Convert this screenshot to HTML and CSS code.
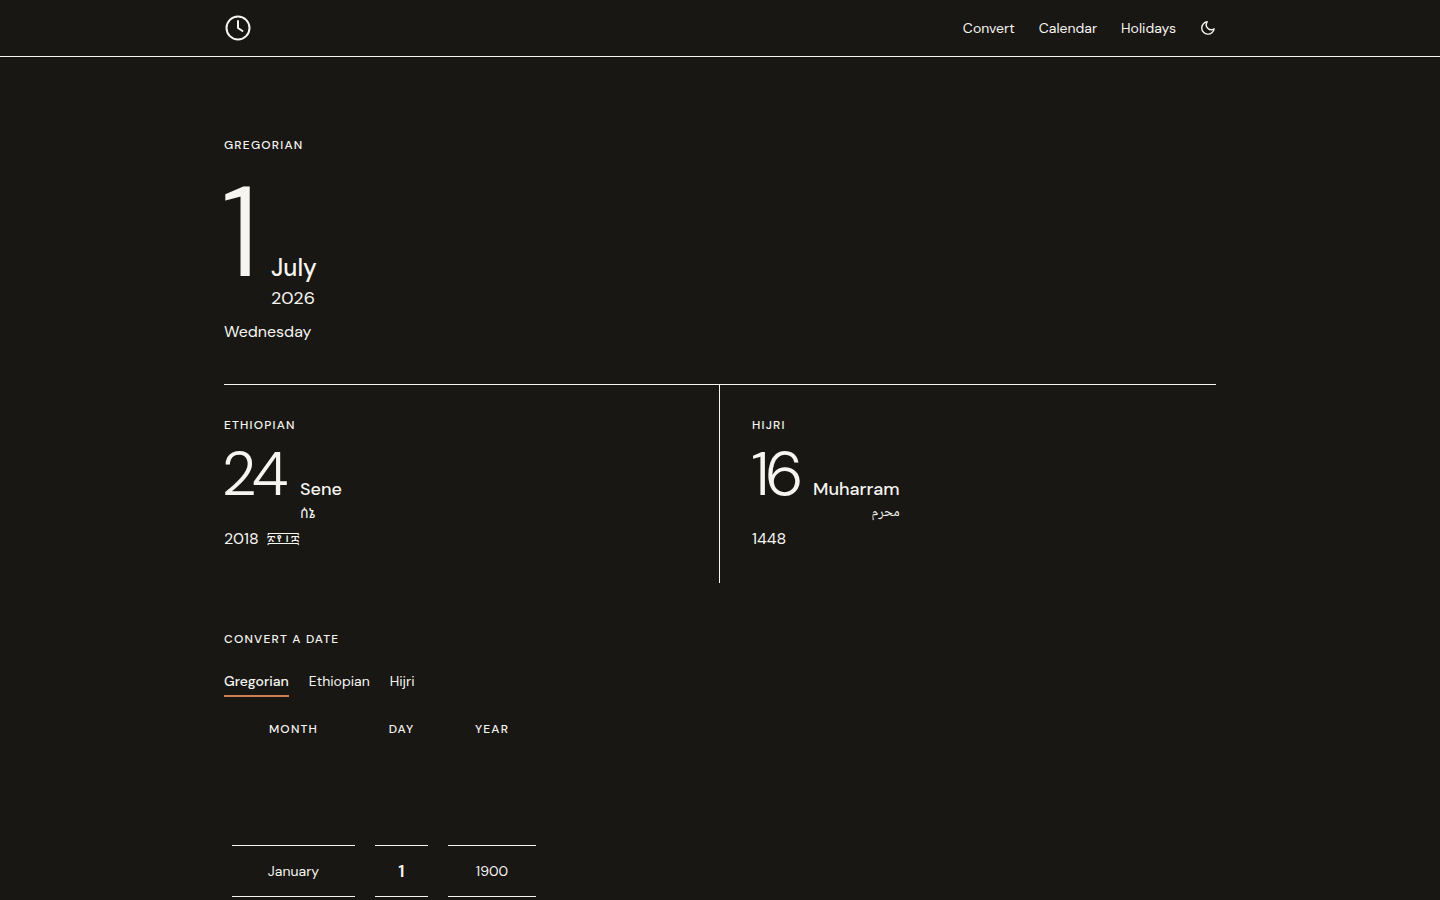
FILE: index.html
```html
<!doctype html>
<html lang="en">

<head>
    <meta charset="utf-8">
    <title>Calendar Converter</title>
    <link rel="stylesheet" href="styles.css">
</head>

<body>
    <header class="site-header">
        <div class="wrap header-row">
            <a class="logo" href="#">
                <svg width="28" height="28" viewBox="0 0 28 28" fill="none" stroke="currentColor" stroke-width="2">
                    <circle cx="14" cy="14" r="11.5" />
                    <path d="M14 7v7l4.5 3" stroke-linecap="round" stroke-linejoin="round" />
                </svg>
            </a>
            <nav class="nav">
                <a href="#convert">Convert</a>
                <a href="#calendar">Calendar</a>
                <a href="#holidays">Holidays</a>
                <button class="theme-toggle" type="button">
                    <svg width="16" height="16" viewBox="0 0 16 16" fill="none" stroke="currentColor" stroke-width="1.4" stroke-linecap="round" stroke-linejoin="round">
                        <path d="M14.1 8.8A6.2 6.2 0 1 1 7.2 1.8 5 5 0 0 0 14.1 8.8z" />
                    </svg>
                </button>
            </nav>
        </div>
    </header>

    <main class="wrap">
        <section class="today">
            <h2 class="label">Gregorian</h2>
            <div class="hero-date">
                <span class="hero-day">1</span>
                <div class="hero-side">
                    <span class="hero-month">July</span>
                    <span class="hero-year">2026</span>
                </div>
            </div>
            <p class="weekday">Wednesday</p>
        </section>

        <section class="others">
            <div class="other">
                <h2 class="label">Ethiopian</h2>
                <div class="date-row">
                    <span class="day">24</span>
                    <div class="side">
                        <span class="month">Sene</span>
                        <span class="native ethiopic" lang="am">ሰኔ</span>
                    </div>
                </div>
                <p class="year">2018 <span class="geez" lang="am">፳፻፲፰</span></p>
            </div>
            <div class="other">
                <h2 class="label">Hijri</h2>
                <div class="date-row">
                    <span class="day day-hijri">16</span>
                    <div class="side">
                        <span class="month">Muharram</span>
                        <span class="native arabic" lang="ar" dir="rtl">محرم</span>
                    </div>
                </div>
                <p class="year">1448</p>
            </div>
        </section>

        <section class="convert" id="convert">
            <h2 class="label">Convert a date</h2>
            <div class="tabs">
                <button class="tab active" type="button">Gregorian</button>
                <button class="tab" type="button">Ethiopian</button>
                <button class="tab" type="button">Hijri</button>
            </div>
            <div class="pickers">
                <div class="picker picker-month">
                    <span class="label">Month</span>
                    <div class="wheel"><div class="item">January</div></div>
                </div>
                <div class="picker picker-day">
                    <span class="label">Day</span>
                    <div class="wheel"><div class="item selected">1</div></div>
                </div>
                <div class="picker picker-year">
                    <span class="label">Year</span>
                    <div class="wheel"><div class="item">1900</div></div>
                </div>
            </div>
        </section>
    </main>
</body>

</html>
```
FILE: styles.css
```css
* {
    box-sizing: border-box;
    margin: 0;
    padding: 0;
}

html {
    height: 100%;
    overflow: hidden;
}

body {
    height: 100%;
    overflow: hidden;
    background: #181714;
    color: #f7f5f0;
    font-family: "DM Sans", Inter, "Noto Sans", sans-serif;
    font-size: 16px;
    line-height: 24px;
}

a {
    color: inherit;
    text-decoration: none;
}

button {
    background: none;
    border: none;
    color: inherit;
    font: inherit;
}

.wrap {
    width: 992px;
    margin: 0 auto;
}

/* Header */
.site-header {
    border-bottom: 1px solid #f7f5f0;
}

.header-row {
    height: 56px;
    display: flex;
    align-items: center;
    justify-content: space-between;
}

.logo,
.theme-toggle {
    display: flex;
}

.nav {
    display: flex;
    align-items: center;
    gap: 24px;
    font-size: 14px;
}

.label {
    display: block;
    font-size: 12px;
    font-weight: 500;
    line-height: 18px;
    letter-spacing: 1.2px;
    text-transform: uppercase;
}

/* Today */
.today {
    height: 328px;
    padding-top: 79px;
    border-bottom: 1px solid #f7f5f0;
}

.hero-date {
    display: flex;
    align-items: baseline;
    gap: 16px;
    height: 147px;
    margin-top: 19px;
}

.hero-day {
    width: 34px;
    margin-left: -3px;
    font-size: 128px;
    font-weight: 300;
    line-height: 120px;
}

.hero-side,
.side {
    display: flex;
    flex-direction: column;
}

.hero-month {
    font-size: 24px;
    font-weight: 500;
    line-height: 32px;
}

.hero-year {
    font-size: 18px;
    line-height: 28px;
}

/* Ethiopian and Hijri */
.others {
    display: grid;
    grid-template-columns: 1fr 1fr;
    height: 198px;
}

.other {
    padding-top: 31px;
}

.other:first-child {
    border-right: 1px solid #f7f5f0;
}

.other:last-child {
    padding-left: 32px;
}

.date-row {
    display: flex;
    align-items: baseline;
    gap: 12px;
    height: 93px;
}

.day {
    width: 67px;
    margin-left: -3px;
    font-size: 62px;
    font-weight: 300;
    line-height: 80px;
    letter-spacing: -4px;
}

.day-hijri {
    width: 50px;
    margin-left: -1px;
    letter-spacing: -5px;
}

.month {
    font-size: 18px;
    font-weight: 500;
    line-height: 26px;
}

.native {
    font-size: 14px;
    line-height: 22px;
}

.ethiopic,
.geez {
    font-family: "Noto Sans Ethiopic", "Noto Serif Ethiopic", "Abyssinica SIL", serif;
}

.arabic {
    font-family: "Noto Naskh Arabic", "Noto Sans Arabic", serif;
}

.geez {
    margin-left: 4px;
    font-size: 14px;
}

/* Converter */
.convert {
    padding-top: 47px;
}

.tabs {
    display: flex;
    gap: 20px;
    margin-top: 21px;
}

.tab {
    height: 28px;
    padding-bottom: 2px;
    border-bottom: 2px solid transparent;
    font-size: 14px;
    line-height: 24px;
}

.tab.active {
    border-color: #c9824f;
    font-weight: 500;
}

.pickers {
    display: flex;
    gap: 4px;
    margin-top: 23px;
    text-align: center;
}

.picker {
    padding: 0 8px;
}

.picker-month {
    width: 139px;
}

.picker-day {
    width: 69px;
}

.picker-year {
    width: 104px;
}

.wheel {
    height: 156px;
    margin-top: 3px;
    padding-top: 104px;
}

.item {
    height: 52px;
    border-top: 1px solid #f7f5f0;
    border-bottom: 1px solid #f7f5f0;
    font-size: 14px;
    line-height: 50px;
}

.item.selected {
    font-size: 18px;
    font-weight: 600;
}
```
